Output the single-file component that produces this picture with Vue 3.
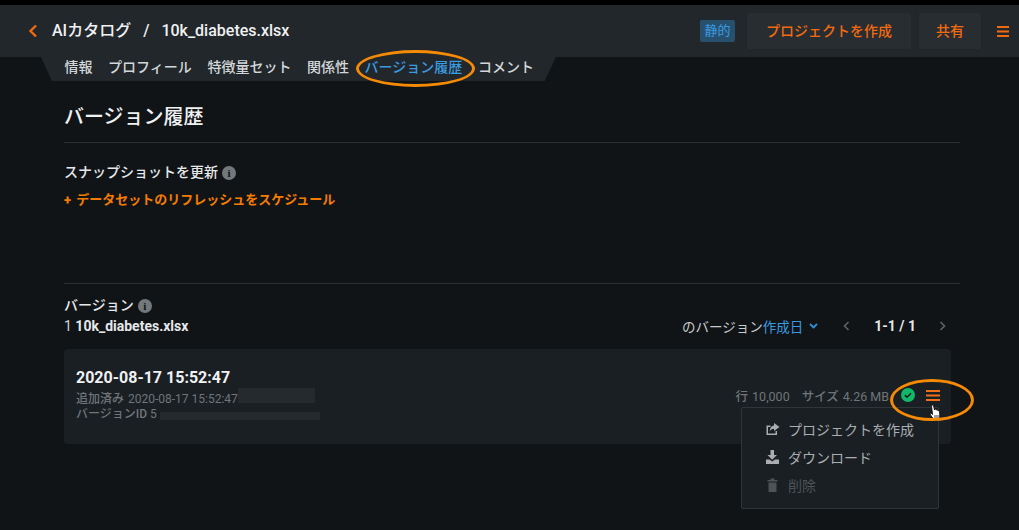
<template>
  <div class="page">
    <div class="topstrip"></div>
    <header class="header">
      <div class="crumbs">
        <svg class="back" width="10" height="14" viewBox="0 0 10 14"><path d="M8 1.500 2.500 7 8 12.500" fill="none" stroke="#f26a0f" stroke-width="2.400"/></svg>
        <span>AIカタログ</span><span class="slash">/</span><span>10k_diabetes.xlsx</span>
      </div>
      <div class="actions">
        <span class="badge">静的</span>
        <button class="btn wide">プロジェクトを作成</button>
        <button class="btn narrow">共有</button>
        <svg class="burger" width="12" height="11" viewBox="0 0 12 11"><path d="M0 1h12M0 5.500h12M0 10h12" stroke="#f26a0f" stroke-width="2"/></svg>
      </div>
    </header>
    <nav class="tabrow">
      <div class="tabs">
        <span v-for="t in tabs" :key="t" class="tab" :class="{ active: t === 'バージョン履歴' }">{{ t }}</span>
      </div>
    </nav>
    <main class="main">
      <h1 class="title">バージョン履歴</h1>
      <section class="snapshot">
        <div class="label">スナップショットを更新<i class="info">i</i></div>
        <div class="schedule"><b>+</b> データセットのリフレッシュをスケジュール</div>
      </section>
      <section class="versions">
        <div class="vhead">
          <div>
            <div class="label">バージョン<i class="info">i</i></div>
            <div class="fname"><span class="num">1</span> <b>10k_diabetes.xlsx</b></div>
          </div>
          <div class="sort">
            <span class="sort-l">のバージョン</span><span class="sort-v">作成日</span>
            <svg class="caret" width="9" height="6" viewBox="0 0 9 6"><path d="M1 1l3.500 3.500L8 1" fill="none" stroke="#2f8fd6" stroke-width="1.800"/></svg>
            <svg class="chev prev" width="7" height="10" viewBox="0 0 7 10"><path d="M5.500 1 1.500 5l4 4" fill="none" stroke="#5e6468" stroke-width="1.600"/></svg>
            <b class="count">1-1 / 1</b>
            <svg class="chev next" width="7" height="10" viewBox="0 0 7 10"><path d="M1.500 1l4 4-4 4" fill="none" stroke="#5e6468" stroke-width="1.600"/></svg>
          </div>
        </div>
        <div class="card">
          <div class="info-col">
            <div class="stamp">2020-08-17 15:52:47</div>
            <div class="meta"><b>追加済み</b><span class="mv">2020-08-17 15:52:47</span><span class="blur b1"></span></div>
            <div class="meta"><b>バージョンID</b> 5<span class="blur b2"></span></div>
          </div>
          <div class="stats">
            <span><b>行</b>10,000</span>
            <span class="size"><b>サイズ</b>4.26 MB</span>
            <svg class="ok" width="14" height="14" viewBox="0 0 14 14"><circle cx="7" cy="7" r="7" fill="#12b76a"/><path d="M3.800 7.200 6 9.200l4-4" fill="none" stroke="#12241c" stroke-width="1.600"/></svg>
            <svg class="burger2" width="14" height="11" viewBox="0 0 14 11"><path d="M0 1h14M0 5.500h14M0 10h14" stroke="#f0701a" stroke-width="2"/></svg>
          </div>
          <span class="ring ring-card"></span>
          <svg class="hand" width="15" height="18" viewBox="0 0 14 18"><path d="M3.500 1.200c.8-.5 1.500 0 1.700.8l.8 4 .4-1c.9-.2 1.400.2 1.500 1 .8-.4 1.400 0 1.600.7.8-.2 1.400.2 1.500 1l.5 4.200c0 2-1 4-2.600 4.600H6.500C5 15.800 3.500 13 2 11 1 9.500 1.600 8.800 2.800 9.300L4 10.500 3 2.500c-.1-.5 0-1 .5-1.300z" fill="#fff" stroke="#111" stroke-width="1"/><path d="M6.500 11v3M8.500 11v3M10.500 11v3" stroke="#111" stroke-width=".8"/></svg>
          <div class="menu">
            <div class="item">
              <svg width="15" height="14" viewBox="0 0 15 14"><path d="M1.500 3.500h4v1.500H3v6.500h7.500V9H12v4H1.500z" fill="#a9adb0"/><path d="M9 1l5.500 4L9 9V6.700C7 6.700 5.500 7.500 4.700 9.500 4.700 6 6.500 3.700 9 3.400z" fill="#a9adb0"/></svg>
              <span>プロジェクトを作成</span>
            </div>
            <div class="item">
              <svg width="15" height="14" viewBox="0 0 15 14"><path d="M5.500 0h3.500v5h3L7.200 9.700 2.500 5h3z" fill="#a9adb0"/><path d="M1 9.500h3.500l2.700 2 2.800-2H14V14H1z" fill="#a9adb0"/></svg>
              <span>ダウンロード</span>
            </div>
            <div class="item off">
              <svg width="15" height="14" viewBox="0 0 15 14"><path d="M2.500 2h10v1.500h-10zM5.500.5h4V2h-4zM3.500 4.500h8V14h-8z" fill="#4e5357"/></svg>
              <span>削除</span>
            </div>
          </div>
        </div>
      </section>
    </main>
  </div>
</template>

<script setup>
const tabs = ['情報', 'プロフィール', '特徴量セット', '関係性', 'バージョン履歴', 'コメント']
</script>

<style>
html, body { margin: 0; background: #101417; }
</style>

<style scoped>
.page {
  width: 1019px; height: 530px; overflow: hidden; background: #101417; color: #e6e8e9;
  font-family: Roboto, "Noto Sans CJK JP", sans-serif; font-size: 14px;
}
.topstrip { height: 5px; background: #000; }
.header {
  height: 52px; background: #22272b; display: flex; align-items: center; justify-content: space-between;
  padding: 0 10px 0 28px; box-sizing: border-box;
}
.crumbs { display: flex; align-items: center; font-size: 16px; font-weight: 500; color: #f0f1f2; line-height: 20px; }
.back { margin-right: 14px; }
.slash { margin: 0 12px; }
.actions { display: flex; align-items: center; }
.badge {
  width: 35px; height: 22px; line-height: 21px; text-align: center; background: #27506f; color: #3b9be0;
  border-radius: 2px; font-size: 13px; margin-right: 12px;
}
.btn {
  height: 36px; border: 0; background: #282d31; color: #f26a0f; border-radius: 2px;
  font: 500 14px Roboto, "Noto Sans CJK JP", sans-serif; padding: 0 0 2px;
}
.wide { width: 164px; margin-right: 8px; }
.narrow { width: 62px; margin-right: 16px; }
.burger { display: block; }
.tabrow { height: 24px; }
.tabs {
  width: 515px; height: 24px; margin-left: 41px; background: #22272b;
  display: flex; align-items: center; padding: 0 0 5px 23.5px; box-sizing: border-box;
  clip-path: polygon(0 0, 100% 0, 97.8% 100%, 2.1% 100%);
}
.tab { font-size: 14px; font-weight: 500; color: #d4d7d9; margin-right: 15.6px; white-space: nowrap; line-height: 20px; }
.tab.active { color: #3a9be0; }
.ring { position: absolute; border: 3px solid #f58a07; border-radius: 50%; box-sizing: border-box; }
.main { padding: 0 59px 0 64px; position: relative; }
.main::before {
  content: ""; position: absolute; left: 356px; top: -31px; width: 119px; height: 37px;
  border: 3px solid #f58a07; border-radius: 50%; box-sizing: border-box;
}
.title {
  margin: 0; height: 61px; line-height: 73px; font-size: 20px; font-weight: 500; color: #f0f1f2;
  border-bottom: 1px solid #2b3034; box-sizing: content-box;
}
.snapshot { height: 141px; border-bottom: 1px solid #2b3034; padding-top: 20px; box-sizing: border-box; }
.label { font-size: 14px; font-weight: 500; line-height: 19px; color: #e6e8e9; display: flex; align-items: center; gap: 4px; }
.info {
  display: inline-block; width: 14px; height: 14px; border-radius: 50%; background: #73787c; color: #101417;
  font: bold 11px/14px "Liberation Serif", serif; text-align: center;
}
.schedule { margin-top: 8px; color: #f57c00; font-size: 13px; font-weight: 700; line-height: 19px; }
.schedule b { margin-right: 2px; }
.versions { padding-top: 9px; }
.vhead { display: flex; justify-content: space-between; align-items: flex-end; padding-right: 9px; height: 44px; }
.fname { line-height: 20px; font-size: 14px; margin: 1px 0; }
.fname b { font-weight: 700; color: #e6e8e9; }
.num { color: #d4d7d9; }
.sort { display: flex; align-items: center; height: 20px; color: #c9ccce; margin-bottom: 1px; }
.sort-l, .sort-v { font-size: 13.5px; }
.sort-v { color: #3a9be0; }
.caret { margin-left: 6px; }
.prev { margin-left: 25px; }
.count { margin: 0 23px 0 24px; font-weight: 700; color: #e6e8e9; font-size: 14px; }
.next { margin-right: 5px; }
.card {
  position: relative; width: 887px; height: 95px; margin-top: 12px; background: #1a1f23; border-radius: 4px;
  padding: 18px 12px 0; box-sizing: border-box; display: flex; justify-content: space-between;
}
.stamp { font-size: 16px; font-weight: 700; line-height: 22px; color: #f0f1f2; margin-bottom: 3px; }
.meta { position: relative; font-size: 12px; line-height: 15px; color: #6f7579; white-space: nowrap; }
.meta b { font-weight: 500; }
.mv { margin-left: 4px; }
.blur { position: absolute; background: #252a2e; height: 15px; }
.b1 { left: 162px; top: -4px; width: 77px; }
.b2 { left: 84px; top: 5px; width: 160px; height: 8px; }
.stats { display: flex; align-items: center; height: 20px; margin-top: 18px; font-size: 12.5px; color: #6f7579; margin-right: -1px; }
.stats b { font-weight: 500; margin-right: 4px; }
.size { margin-left: 12px; }
.ok { margin-left: 12px; }
.burger2 { margin-left: 11px; }
.ring-card { left: 826px; top: 30px; width: 84px; height: 42px; z-index: 4; }
.hand { position: absolute; left: 864px; top: 55px; z-index: 3; }
.menu {
  position: absolute; left: 677px; top: 58px; width: 198px; height: 102px; background: #1a1f23;
  border: 1px solid #30353a; border-radius: 2px; box-sizing: border-box; padding: 7px 0 0 23px; z-index: 2;
}
.item { display: flex; align-items: center; gap: 8px; height: 28px; font-size: 14px; color: #a9adb0; }
.item.off { color: #4e5357; }
</style>
